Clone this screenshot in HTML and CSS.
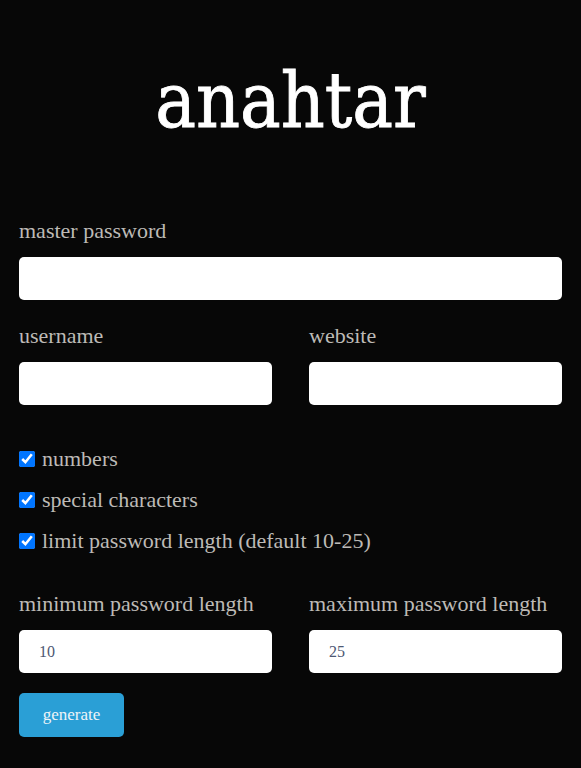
FILE: index.html
```html
<!DOCTYPE html>
<html lang="en">
<head>
<meta charset="utf-8">
<title>anahtar</title>
<link rel="stylesheet" href="styles.css">
</head>
<body>
<main class="page">
  <h1 class="title">anahtar</h1>
  <form class="form">
    <div class="field">
      <label class="label" for="master">master password</label>
      <input class="input" id="master" type="password">
    </div>
    <div class="row">
      <div class="field">
        <label class="label" for="username">username</label>
        <input class="input" id="username" type="text">
      </div>
      <div class="field">
        <label class="label" for="website">website</label>
        <input class="input" id="website" type="text">
      </div>
    </div>
    <div class="checks">
      <label class="check"><input type="checkbox" checked> numbers</label>
      <label class="check"><input type="checkbox" checked> special characters</label>
      <label class="check"><input type="checkbox" checked> limit password length (default 10-25)</label>
    </div>
    <div class="row row-lengths">
      <div class="field">
        <label class="label" for="min">minimum password length</label>
        <input class="input" id="min" type="text" value="10">
      </div>
      <div class="field">
        <label class="label" for="max">maximum password length</label>
        <input class="input" id="max" type="text" value="25">
      </div>
    </div>
    <div class="actions">
      <button class="btn" type="button">generate</button>
    </div>
  </form>
</main>
</body>
</html>
```
FILE: styles.css
```css
html, body {
  margin: 0;
  padding: 0;
  background: #070707;
}
body {
  font-family: "Liberation Serif", "Times New Roman", serif;
  color: #bdbab6;
}
.page {
  padding: 55px 19px 0;
}
.title {
  margin: 0;
  text-align: center;
  font-family: "DejaVu Serif Condensed", "DejaVu Serif", serif;
  font-weight: normal;
  font-size: 76px;
  line-height: 92px;
  color: #ffffff;
  -webkit-text-stroke: 0.8px #ffffff;
}
.form {
  display: flex;
  flex-direction: column;
  margin-top: 71px;
}
.field {
  display: flex;
  flex-direction: column;
  gap: 13px;
}
.label {
  font-size: 22px;
  line-height: 26px;
  color: #bdbab6;
}
.input {
  box-sizing: border-box;
  height: 43px;
  border: none;
  border-radius: 5px;
  background: #ffffff;
  padding: 0 20px;
  font-family: "Liberation Serif", "Times New Roman", serif;
  font-size: 16px;
  color: #4d5873;
  outline: none;
}
.row {
  display: grid;
  grid-template-columns: 1fr 1fr;
  column-gap: 37px;
  margin-top: 23px;
}
.checks {
  display: flex;
  flex-direction: column;
  gap: 15px;
  margin-top: 41px;
}
.check {
  display: flex;
  align-items: center;
  font-size: 22px;
  line-height: 26px;
  color: #bdbab6;
}
.check input {
  width: 16px;
  height: 16px;
  margin: 0 7px 0 0;
  accent-color: #0075ff;
}
.row-lengths {
  margin-top: 37px;
}
.actions {
  margin-top: 20px;
}
.btn {
  box-sizing: border-box;
  width: 105px;
  height: 44px;
  border: none;
  border-radius: 5px;
  background: #2a9fd6;
  color: #eef4f8;
  font-family: "Liberation Serif", "Times New Roman", serif;
  font-size: 17px;
  padding: 0;
}
```
